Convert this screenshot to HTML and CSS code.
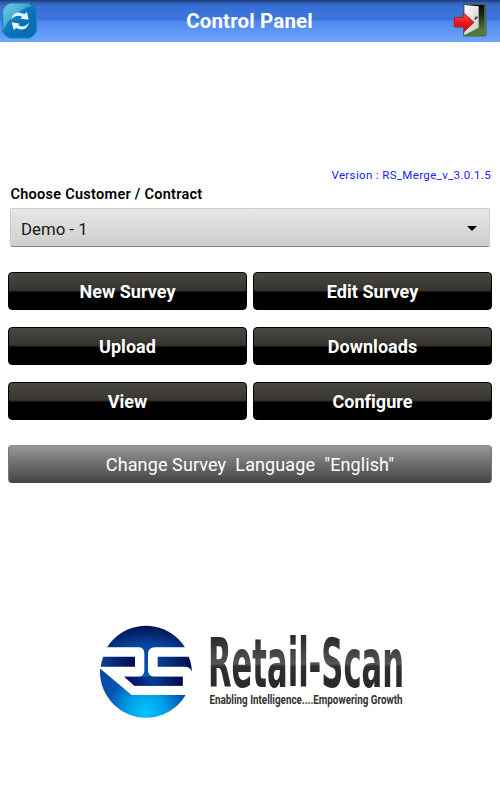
FILE: index.html
```html
<!DOCTYPE html>
<html lang="en">
<head>
<meta charset="utf-8">
<title>Control Panel</title>
<link rel="stylesheet" href="styles.css">
</head>
<body>
<header class="bar">
  <svg class="sync" width="38" height="40" viewBox="0 0 114 120">
    <defs>
      <linearGradient id="tile" x1="0" y1="0" x2="1" y2="1"><stop offset="0" stop-color="#39a5cd"/><stop offset=".5" stop-color="#0873bb"/><stop offset="1" stop-color="#0868b0"/></linearGradient>
      <linearGradient id="gloss" x1="0" y1="0" x2="1" y2="1"><stop offset="0" stop-color="#8bdde8" stop-opacity=".7"/><stop offset="1" stop-color="#6dc9e6" stop-opacity=".2"/></linearGradient>
    </defs>
    <path d="M31 9H87Q103 13 109 29V93Q104 108 89 114H30Q14 108 8 95V30Q14 14 31 9Z" fill="url(#tile)" stroke="#1788bc" stroke-width="3" stroke-linejoin="round"/>
    <path d="M31 11H86L94 19Q34 36 10 91V30Q16 15 31 11Z" fill="url(#gloss)"/>
    <path d="M33 59Q41 27 73 42L81 36L86 59L60 56L67 51Q49 41 33 59Z" fill="#e4f6f7"/>
    <path d="M88 67Q78 99 49 84L41 90L35 67L60 71L54 76Q73 86 88 67Z" fill="#e4f6f7"/>
  </svg>
  <h1 class="title">Control Panel</h1>
  <svg class="exit" width="36" height="38" viewBox="0 0 108 114">
    <defs>
      <linearGradient id="room" x1="0" y1="0" x2="0" y2="1"><stop offset="0" stop-color="#050805"/><stop offset=".35" stop-color="#1b2d16"/><stop offset=".8" stop-color="#4a7a35"/><stop offset="1" stop-color="#4c8033"/></linearGradient>
      <linearGradient id="door" x1="0" y1="0" x2="1" y2="1"><stop offset="0" stop-color="#fff"/><stop offset="1" stop-color="#c5c8c6"/></linearGradient>
      <linearGradient id="arrow" x1="0" y1="0" x2="0" y2="1"><stop offset="0" stop-color="#ff5a4e"/><stop offset=".5" stop-color="#ef171c"/><stop offset="1" stop-color="#b80914"/></linearGradient>
    </defs>
    <path d="M38 13H105V108H38Z" fill="url(#room)" stroke="#53634e" stroke-width="3"/>
    <path d="M102 15V105" stroke="#66745e" stroke-width="4"/>
    <path d="M40 15L83 19V83L40 105Z" fill="url(#door)"/>
    <path d="M72 59L75 52L80 53" fill="none" stroke="#414843" stroke-width="5"/>
    <path d="M10 53H38V39L69 67L39 95V81H10Z" fill="url(#arrow)" stroke="#b51b28" stroke-width="3"/>
  </svg>
</header>
<main class="content">
  <p class="version">Version : RS_Merge_v_3.0.1.5</p>
  <p class="label">Choose Customer / Contract</p>
  <div class="spinner"><span class="chosen">Demo - 1</span><i class="caret"></i></div>
  <div class="grid">
    <button class="btn">New Survey</button>
    <button class="btn">Edit Survey</button>
    <button class="btn">Upload</button>
    <button class="btn">Downloads</button>
    <button class="btn">View</button>
    <button class="btn">Configure</button>
  </div>
  <button class="language">Change Survey&nbsp; Language&nbsp; "English"</button>
</main>
<footer class="brand">
  <svg width="115" height="115" viewBox="0 0 345 345">
    <defs>
      <radialGradient id="globe" gradientUnits="userSpaceOnUse" cx="168" cy="290" r="260"><stop offset="0" stop-color="#00c5ff"/><stop offset=".22" stop-color="#009ee8"/><stop offset=".45" stop-color="#0753ae"/><stop offset=".78" stop-color="#05449d"/><stop offset="1" stop-color="#02104c"/></radialGradient>
      <linearGradient id="bars" x1="0" y1="0" x2="1" y2="0"><stop offset="0" stop-color="#073f93"/><stop offset="1" stop-color="#020d4c"/></linearGradient>
      <linearGradient id="bars2" x1="0" y1="0" x2="1" y2="0"><stop offset="0" stop-color="#06085a"/><stop offset=".5" stop-color="#073b93"/><stop offset="1" stop-color="#03094b"/></linearGradient>
    </defs>
    <circle cx="168" cy="170" r="138" fill="url(#globe)"/>
    <path d="M20 97H147Q163 98 163 115V167Q162 184 146 185H103L133 212H278V185H194Q175 184 174 167V115Q175 98 194 97H325V240H125L32 162H20Z" fill="#fff"/>
    <path d="M40 125H135V155H32Q34 138 40 125Z" fill="url(#bars)"/>
    <path d="M203 125H296Q304 142 306 170Q300 155 284 155H203Z" fill="url(#bars)"/>
    <path d="M103 185H278V212H133Z" fill="url(#bars2)"/>
  </svg>
  <svg class="words" width="215" height="110" viewBox="0 0 215 110">
    <defs><linearGradient id="ink" gradientUnits="userSpaceOnUse" x1="0" y1="-24" x2="0" y2="0"><stop offset="0" stop-color="#292929"/><stop offset=".55" stop-color="#555"/><stop offset=".6" stop-color="#303030"/><stop offset="1" stop-color="#292929"/></linearGradient></defs>
    <text class="name" transform="translate(8 72) scale(1 2.14)" x="0" y="0" textLength="196" lengthAdjust="spacingAndGlyphs" fill="url(#ink)">Retail-Scan</text>
    <text class="tagline" transform="translate(9.5 89) scale(1 1.2)" x="0" y="0" textLength="193" lengthAdjust="spacingAndGlyphs">Enabling Intelligence....Empowering Growth</text>
  </svg>
</footer>
</body>
</html>
```
FILE: styles.css
```css
* { box-sizing: border-box; }
body { margin: 0; width: 500px; height: 800px; overflow: hidden; background: #fff; font-family: Roboto, "Liberation Sans", sans-serif; }
.bar { height: 42px; display: flex; justify-content: space-between; align-items: flex-start; background: linear-gradient(#203c70 0, #2e60b9 3px, #3970d5 7px, #3b76de 20px, #4d87eb 21px, #6ca3fb 40px, #70a4f7 42px); }
.sync { width: 48px; height: 40px; padding-right: 10px; }
.title { margin: 0; color: #fff; font-size: 20.5px; font-weight: 700; line-height: 43px; letter-spacing: .15px; }
.exit { margin-right: 13px; }
.content { padding: 126px 8px 0; }
.version { margin: 0 1px 0 0; height: 16px; line-height: 15px; text-align: right; color: #2020ee; font-size: 11.5px; letter-spacing: .35px; }
.label { margin: 0 0 0 2.5px; height: 24px; line-height: 21px; font-size: 14.5px; font-weight: 600; letter-spacing: .27px; color: #000; }
.spinner { height: 39px; margin: 0 2px; padding: 3px 12px 0 10px; border: 1px solid #cdcdcd; border-bottom-color: #858585; border-radius: 2px; background: linear-gradient(#e7e7e7, #cecece); display: flex; align-items: center; justify-content: space-between; }
.chosen { font-size: 16.8px; color: #181818; }
.caret { border: 5px solid transparent; border-top-color: #000; border-bottom: 0; margin-bottom: 2px; }
.grid { display: grid; grid-template-columns: 1fr 1fr; column-gap: 6px; row-gap: 17px; margin-top: 25px; }
.btn { height: 38px; padding: 1px 0 0; border: 1px solid #000; border-radius: 4px; background: linear-gradient(#494843 0, #38352f 46%, #292721 50%, #000 54%, #000 100%); color: #fff; font: 700 18px Roboto, "Liberation Sans", sans-serif; letter-spacing: .05px; }
.language { display: block; width: 100%; height: 38px; margin-top: 25px; padding: 1px 0 0; border: 1px solid #777; border-color: #8c8c8c #777 #444; border-radius: 4px; background: linear-gradient(#969696, #454545); color: #fff; font: 400 18px Roboto, "Liberation Sans", sans-serif; letter-spacing: .11px; }
.brand { display: flex; margin: 132px 0 0 90px; }
.words { margin-left: -5px; overflow: visible; }
.name { font: 700 32px "DejaVu Sans Condensed", "DejaVu Sans", sans-serif; font-stretch: condensed; }
.tagline { font: 700 10px "Liberation Sans Narrow", Roboto, sans-serif; fill: #333; }
```
